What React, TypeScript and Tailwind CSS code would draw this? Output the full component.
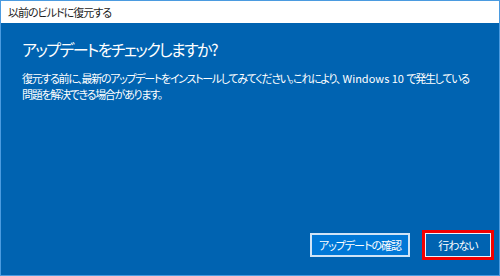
import React from "react";

export default function App() {
  return (
    <div
      className="w-[500px] h-[276px] border border-[#4b9be0] flex flex-col [font-feature-settings:'palt'] overflow-hidden"
      style={{ fontFamily: '"Noto Sans CJK JP", "Noto Sans", sans-serif' }}
    >
      <div className="h-[22px] shrink-0 bg-white flex items-center pl-[7px] text-[11px] tracking-[-1px] text-[#1b1b1b]">
        以前のビルドに復元する
      </div>
      <div className="flex-1 bg-[#0063b1] flex flex-col pl-[21px] pr-[8px] pb-[18px] text-white">
        <h1 className="mt-[14px] text-[16px] leading-[24px] tracking-[-1.6px] font-normal whitespace-nowrap">
          アップデートをチェックしますか?
        </h1>
        <p className="mt-[9px] text-[11px] leading-[16px] tracking-[-1.3px] whitespace-nowrap">
          復元する前に、最新のアップデートをインストールしてみてください。これにより、
          <span className="tracking-[0px]"> Windows 10 </span>
          で発生している
          <br />
          問題を解決できる場合があります。
        </p>
        <div className="mt-auto flex justify-end gap-[15px]">
          <button className="w-[100px] h-[24px] bg-[#0078d7] border-2 border-[#cfe4f7] text-[11px] tracking-[-1px] text-white flex items-center justify-center">
            アップデートの確認
          </button>
          <button className="w-[66px] h-[24px] bg-[#0063b1] border border-[#e8f1fa] outline-[3px] outline-solid outline-[#f20000] text-[11px] tracking-[-1px] text-white flex items-center justify-center">
            行わない
          </button>
        </div>
      </div>
    </div>
  );
}
